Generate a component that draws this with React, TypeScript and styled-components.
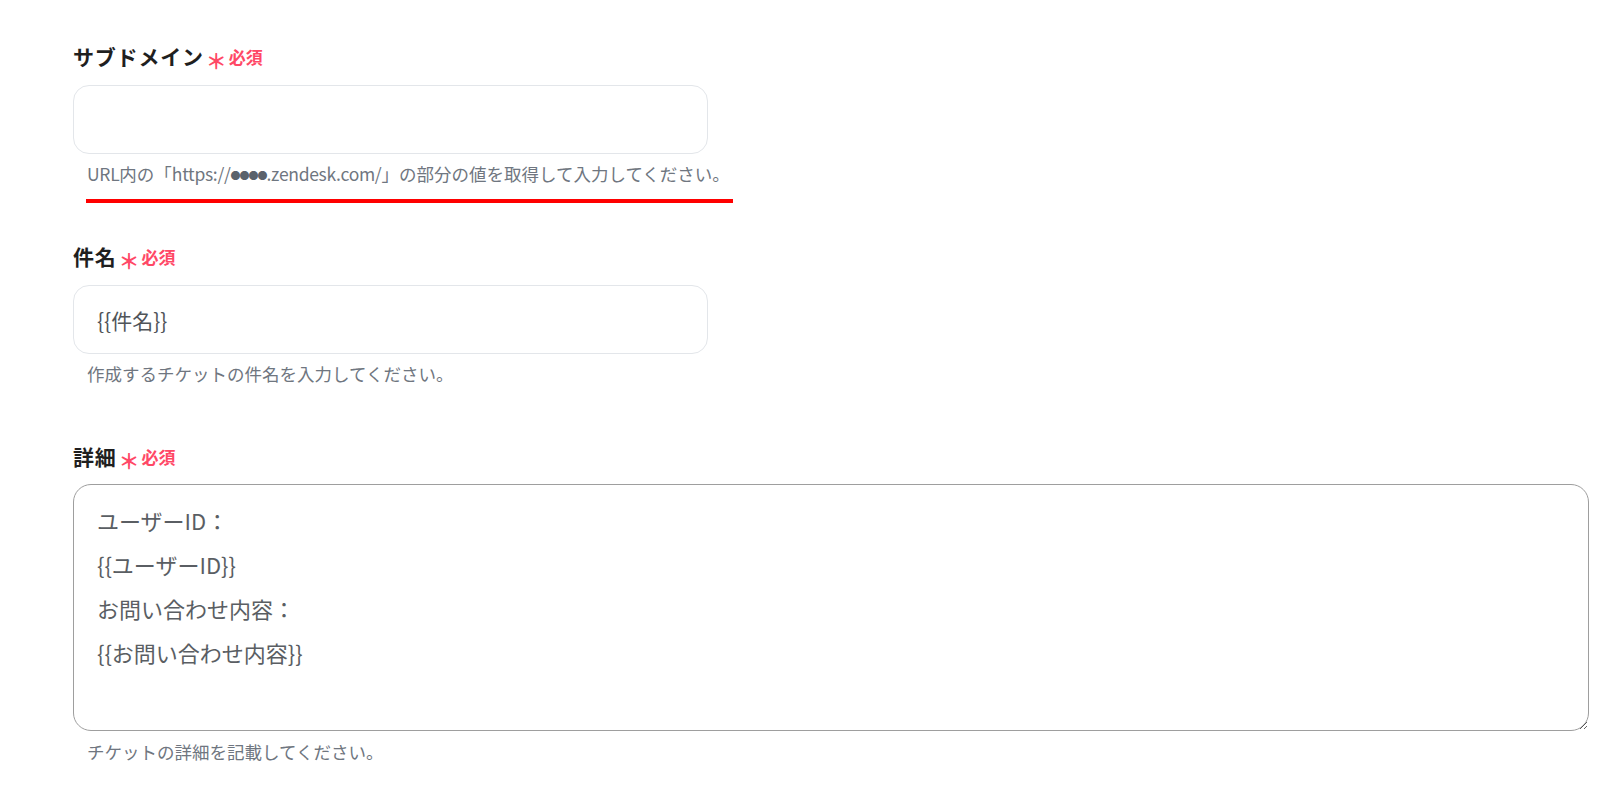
import styled, { createGlobalStyle } from 'styled-components';

const GlobalStyle = createGlobalStyle`
  body {
    margin: 0;
    background: #ffffff;
    font-family: "Noto Sans CJK JP", "Noto Sans", sans-serif;
    text-spacing-trim: space-all;
  }
`;

const Page = styled.div`
  padding: 41px 11px 0 73px;
  display: flex;
  flex-direction: column;
  gap: 55px;
`;

const Field = styled.div`
  position: relative;
  display: flex;
  flex-direction: column;
`;

const Label = styled.div`
  display: flex;
  align-items: center;
  height: 30px;
  font-size: 21px;
  font-weight: 700;
  color: #1f1f1f;
  margin-bottom: 14px;
  letter-spacing: 0.8px;
`;

const Asterisk = styled.span`
  color: #ff4866;
  font-size: 21px;
  font-weight: 700;
  margin: 8px 2px 0 2px;
  letter-spacing: 0;
`;

const Required = styled.span`
  color: #ff4866;
  font-size: 17px;
  font-weight: 700;
  letter-spacing: 0;
`;

const Input = styled.div`
  box-sizing: border-box;
  width: 635px;
  height: 69px;
  border: 1.5px solid #e3e6ea;
  border-radius: 16px;
  padding: 0 23px;
  display: flex;
  align-items: center;
  font-size: 21px;
  color: #505459;
`;

const TextArea = styled.textarea`
  box-sizing: border-box;
  width: 1516px;
  height: 247px;
  margin: -1px 0 0;
  border: 1.5px solid #9e9e9e;
  border-radius: 18px;
  padding: 13px 23px;
  font-family: "Noto Sans CJK JP", "Noto Sans", sans-serif;
  font-size: 22px;
  line-height: 44px;
  color: #5a5e63;
  background: #fff;
  outline: none;
  text-spacing-trim: space-all;
`;

const Help = styled.div<{ $gap?: number }>`
  margin-top: ${(p) => p.$gap ?? 8}px;
  padding-left: 14px;
  height: 24px;
  line-height: 24px;
  font-size: 17.5px;
  color: #6f7680;
`;

const Latin = styled.span`
  letter-spacing: -0.3px;
`;

const Dots = styled.span`
  font-size: 10px;
  letter-spacing: -1px;
  vertical-align: 1px;
  color: #5b626b;
`;

const Marker = styled.div`
  position: absolute;
  left: 13px;
  bottom: -17px;
  width: 647px;
  height: 4px;
  background: #ff0000;
`;

function FieldLabel({ children }: { children: string }) {
  return (
    <Label>
      {children}
      <Asterisk>＊</Asterisk>
      <Required>必須</Required>
    </Label>
  );
}

export default function App() {
  return (
    <>
      <GlobalStyle />
      <Page>
        <Field>
          <FieldLabel>サブドメイン</FieldLabel>
          <Input />
          <Help>
            <Latin>URL</Latin>内の「<Latin>https://</Latin>
            <Dots>●●●●</Dots>
            <Latin>.zendesk.com/</Latin>」の部分の値を取得して入力してください。
          </Help>
          <Marker />
        </Field>
        <Field>
          <FieldLabel>件名</FieldLabel>
          <Input>{'{{件名}}'}</Input>
          <Help>作成するチケットの件名を入力してください。</Help>
        </Field>
        <Field>
          <FieldLabel>詳細</FieldLabel>
          <TextArea
            readOnly
            defaultValue={'ユーザーID：\n{{ユーザーID}}\nお問い合わせ内容：\n{{お問い合わせ内容}}'}
          />
          <Help $gap={9}>チケットの詳細を記載してください。</Help>
        </Field>
      </Page>
    </>
  );
}
